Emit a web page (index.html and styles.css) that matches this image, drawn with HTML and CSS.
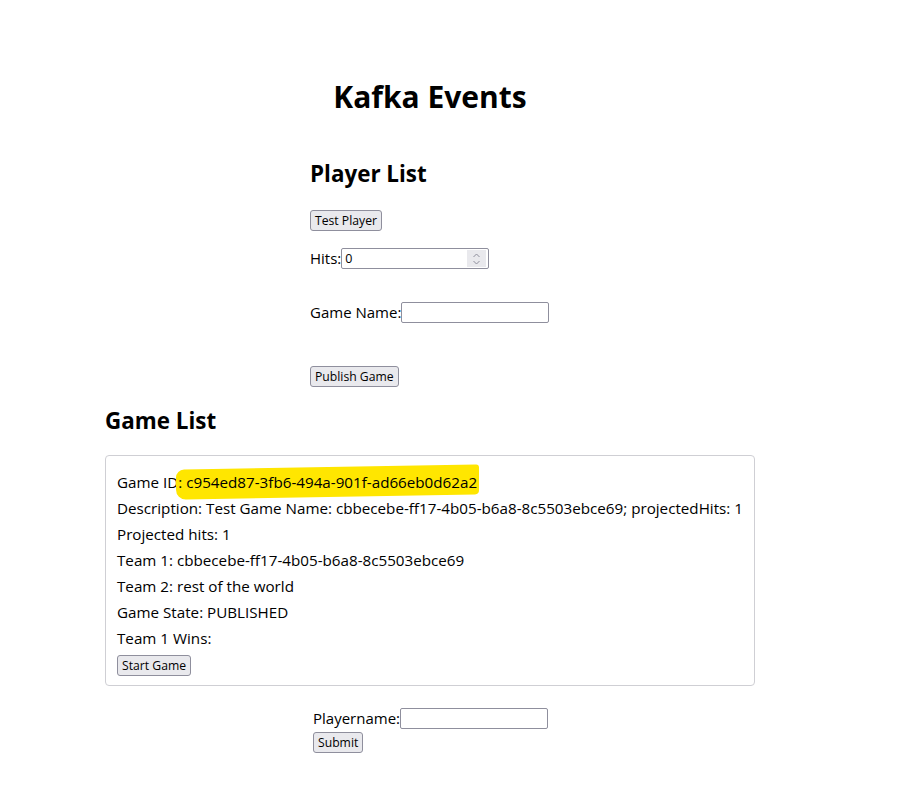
FILE: index.html
```html
<!DOCTYPE html>
<html lang="en">
<head>
<meta charset="utf-8">
<title>Kafka Events</title>
<link rel="stylesheet" href="styles.css">
</head>
<body>
<div class="page">
  <h1 class="title">Kafka Events</h1>

  <section class="player">
    <h2 class="heading">Player List</h2>
    <div class="row-btn"><button class="btn">Test Player</button></div>
    <div class="field hits-row">
      <label class="label">Hits:</label>
      <div class="numbox">
        <input class="num-input" type="text" value="0">
        <span class="spinner">
          <svg width="9" height="14" viewBox="0 0 9 14"><path d="M1.5 5 L4.5 2 L7.5 5" fill="none" stroke="#8f8f9d" stroke-width="1"/><path d="M1.5 9 L4.5 12 L7.5 9" fill="none" stroke="#8f8f9d" stroke-width="1"/></svg>
        </span>
      </div>
    </div>
    <div class="field name-row">
      <label class="label">Game Name:</label>
      <input class="text-input" type="text">
    </div>
    <div class="row-btn publish-row"><button class="btn">Publish Game</button></div>
  </section>

  <h2 class="heading game-heading">Game List</h2>

  <div class="card">
    <p class="line">Game ID<span class="mark">: c954ed87-3fb6-494a-901f-ad66eb0d62a2</span></p>
    <p class="line">Description: Test Game Name: cbbecebe-ff17-4b05-b6a8-8c5503ebce69; projectedHits: 1</p>
    <p class="line">Projected hits: 1</p>
    <p class="line">Team 1: cbbecebe-ff17-4b05-b6a8-8c5503ebce69</p>
    <p class="line">Team 2: rest of the world</p>
    <p class="line">Game State: PUBLISHED</p>
    <p class="line">Team 1 Wins:</p>
    <div class="card-actions"><button class="btn">Start Game</button></div>
  </div>

  <form class="signup">
    <div class="field">
      <label class="label">Playername:</label>
      <input class="text-input" type="text">
    </div>
    <div class="submit-row"><button class="btn" type="button">Submit</button></div>
  </form>
</div>
</body>
</html>
```

FILE: styles.css
```css
* { box-sizing: border-box; }

html, body {
  margin: 0;
  padding: 0;
  background: #ffffff;
}

body {
  font-family: "Open Sans", "Noto Sans", "DejaVu Sans", sans-serif;
  font-size: 15.2px;
  color: #000000;
}

.page {
  width: 650px;
  margin-left: 105px;
  padding-top: 77px;
}

.title {
  margin: 0;
  font-size: 30px;
  line-height: 40px;
  font-weight: 700;
  text-align: center;
}

.player {
  margin-left: 205px;
  padding-top: 42px;
}

.heading {
  margin: 0;
  font-size: 22.4px;
  line-height: 30px;
  font-weight: 700;
}

.row-btn {
  margin-top: 21px;
  display: flex;
}

.btn {
  font-family: inherit;
  font-size: 12.2px;
  line-height: 17px;
  height: 21px;
  padding: 1px 4px;
  color: #000;
  background: #e9e9ed;
  border: 1px solid #8f8f9d;
  border-radius: 3px;
}

.field {
  display: flex;
  align-items: center;
  height: 21px;
}

.hits-row { margin-top: 17px; }
.name-row { margin-top: 33px; }
.publish-row { margin-top: 43px; }

.label {
  font-size: 15px;
  line-height: 21px;
}

.numbox {
  display: flex;
  align-items: center;
  width: 148px;
  height: 21px;
  border: 1px solid #8f8f9d;
  border-radius: 2px;
  padding: 0 2px 0 3px;
  background: #fff;
}

.num-input {
  flex: 1;
  min-width: 0;
  border: 0;
  outline: none;
  padding: 0;
  font-family: inherit;
  font-size: 12.5px;
  height: 17px;
  background: transparent;
}

.spinner {
  width: 19px;
  height: 17px;
  background: #e9e9ed;
  display: flex;
  align-items: center;
  justify-content: center;
}

.text-input {
  width: 148px;
  height: 21px;
  border: 1px solid #8f8f9d;
  border-radius: 2px;
  padding: 0 3px;
  font-family: inherit;
  font-size: 12.5px;
  background: #fff;
}

.game-heading {
  margin-top: 19px;
}

.card {
  margin-top: 19px;
  width: 650px;
  border: 1px solid #cfcfd4;
  border-radius: 4px;
  padding: 13px 11px 9px 11px;
}

.line {
  margin: 0;
  line-height: 26px;
}

.mark {
  position: relative;
  z-index: 0;
}

.mark::before {
  content: "";
  position: absolute;
  left: -2px;
  right: -2px;
  top: -5px;
  bottom: -5px;
  background: #ffe600;
  transform: skewY(-1deg);
  border-radius: 8px 3px 4px 10px;
  z-index: -1;
}

.card-actions {
  margin-top: 4px;
  display: flex;
}

.signup {
  margin: 22px 0 0 208px;
}

.submit-row {
  margin-top: 3px;
  display: flex;
}
```
